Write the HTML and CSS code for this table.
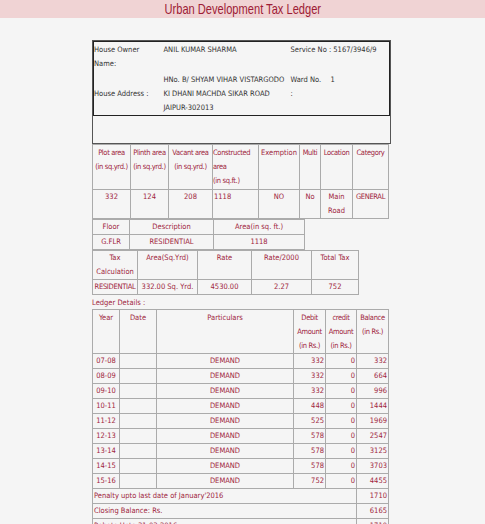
FILE: index.html
```html
<!DOCTYPE html>
<html>
<head>
<meta charset="utf-8">
<link rel="stylesheet" href="styles.css">
</head>
<body>
<div class="topbar"><h1 class="title"><span class="title-text">Urban Development Tax Ledger</span></h1></div>
<div class="wrap">
  <div class="owner">
    <table class="owner-tbl">
      <colgroup><col style="width:70px"><col style="width:127px"><col style="width:40px"><col></colgroup>
      <tr class="r1">
        <td>House Owner<br>Name:</td>
        <td>ANIL KUMAR SHARMA</td>
        <td colspan="2" class="nowrap">Service No : 5167/3946/9</td>
      </tr>
      <tr class="r2">
        <td class="mid">House Address :</td>
        <td>HNo. B/ SHYAM VIHAR VISTARGODO KI DHANI MACHDA SIKAR ROAD JAIPUR-302013</td>
        <td>Ward No.<br>:</td>
        <td>1</td>
      </tr>
    </table>
    <div class="owner-blank"></div>
  </div>

  <table class="grid plot">
    <colgroup><col style="width:38px"><col style="width:38px"><col style="width:44px"><col style="width:46px"><col style="width:41px"><col style="width:21px"><col style="width:32px"><col style="width:36px"></colgroup>
    <tr class="head3">
      <td class="nw">Plot area<br>(in sq.yrd.)</td>
      <td class="nw">Plinth area<br>(in sq.yrd.)</td>
      <td class="nw">Vacant area<br>(in sq.yrd.)</td>
      <td class="l nw">Constructed<br>area<br>(in sq.ft.)</td>
      <td>Exemption</td>
      <td class="nw">Multi</td>
      <td class="nw">Location</td>
      <td class="nw">Category</td>
    </tr>
    <tr>
      <td>332</td>
      <td>124</td>
      <td>208</td>
      <td class="l">1118</td>
      <td>NO</td>
      <td>No</td>
      <td>Main<br>Road</td>
      <td class="nw">GENERAL</td>
    </tr>
  </table>

  <table class="grid floor">
    <colgroup><col style="width:37px"><col style="width:84px"><col style="width:91px"></colgroup>
    <tr><td>Floor</td><td>Description</td><td>Area(in sq. ft.)</td></tr>
    <tr><td>G.FLR</td><td>RESIDENTIAL</td><td>1118</td></tr>
  </table>

  <table class="grid tax">
    <colgroup><col style="width:45px"><col style="width:60px"><col style="width:54px"><col style="width:60px"><col style="width:47px"></colgroup>
    <tr><td>Tax<br>Calculation</td><td>Area(Sq.Yrd)</td><td>Rate</td><td>Rate/2000</td><td>Total Tax</td></tr>
    <tr><td class="tight">RESIDENTIAL</td><td>332.00 Sq. Yrd.</td><td>4530.00</td><td>2.27</td><td>752</td></tr>
  </table>

  <div class="ledger-label">Ledger Details :</div>

  <table class="grid ledger">
    <colgroup><col style="width:27px"><col style="width:37px"><col style="width:137px"><col style="width:32px"><col style="width:31px"><col style="width:32px"></colgroup>
    <tr class="lhead">
      <td>Year</td><td>Date</td><td>Particulars</td>
      <td class="nw">Debit<br>Amount<br>(in Rs.)</td><td class="nw">credit<br>Amount<br>(in Rs.)</td><td class="nw">Balance<br>(in Rs.)</td>
    </tr>
    <tr><td>07-08</td><td></td><td>DEMAND</td><td class="r">332</td><td class="r">0</td><td class="r">332</td></tr>
    <tr><td>08-09</td><td></td><td>DEMAND</td><td class="r">332</td><td class="r">0</td><td class="r">664</td></tr>
    <tr><td>09-10</td><td></td><td>DEMAND</td><td class="r">332</td><td class="r">0</td><td class="r">996</td></tr>
    <tr><td>10-11</td><td></td><td>DEMAND</td><td class="r">448</td><td class="r">0</td><td class="r">1444</td></tr>
    <tr><td>11-12</td><td></td><td>DEMAND</td><td class="r">525</td><td class="r">0</td><td class="r">1969</td></tr>
    <tr><td>12-13</td><td></td><td>DEMAND</td><td class="r">578</td><td class="r">0</td><td class="r">2547</td></tr>
    <tr><td>13-14</td><td></td><td>DEMAND</td><td class="r">578</td><td class="r">0</td><td class="r">3125</td></tr>
    <tr><td>14-15</td><td></td><td>DEMAND</td><td class="r">578</td><td class="r">0</td><td class="r">3703</td></tr>
    <tr><td>15-16</td><td></td><td>DEMAND</td><td class="r">752</td><td class="r">0</td><td class="r">4455</td></tr>
    <tr><td colspan="5" class="l">Penalty upto last date of January'2016</td><td class="r">1710</td></tr>
    <tr><td colspan="5" class="l">Closing Balance: Rs.</td><td class="r">6165</td></tr>
    <tr><td colspan="5" class="l">Rebate Upto 31-03-2016</td><td class="r">1710</td></tr>
  </table>
</div>
</body>
</html>
```

FILE: styles.css
```css
html, body {
  margin: 0;
  padding: 0;
  background: #f5f5f5;
}
body {
  font-family: "DejaVu Sans Condensed", "DejaVu Sans", sans-serif;
  font-size: 7.5px;
  color: #a0253d;
}
.topbar {
  height: 18px;
  background: #f0d3d4;
  text-align: center;
  overflow: hidden;
}
.title {
  margin: 0;
  font-family: "Liberation Sans", Arial, sans-serif;
  font-weight: normal;
  font-size: 15px;
  line-height: 18px;
  color: #9e1c36;
}
.title-text {
  display: inline-block;
  transform: scaleX(0.74);
  transform-origin: center;
}
.wrap {
  margin: 22px 0 0 92px;
  width: 299px;
}
.owner {
  border: 1px solid #555;
  width: 297px;
}
.owner-tbl {
  width: 100%;
  border-collapse: collapse;
  table-layout: fixed;
  border: 1px solid #222;
  color: #333;
}
.owner-tbl td {
  padding: 0 1px 0 0;
  line-height: 14px;
  vertical-align: top;
}
.owner-tbl .r1 td { height: 30px; padding-top: 1px; }
.owner-tbl .r2 td { height: 41px; }
.owner-tbl td.mid { vertical-align: middle; }
.nowrap { white-space: nowrap; }
.owner-blank {
  height: 27px;
}
.grid {
  border-collapse: collapse;
  table-layout: fixed;
}
.grid td {
  border: 1px solid #ababab;
  padding: 0 1px;
  line-height: 14px;
  text-align: center;
  vertical-align: top;
  overflow: hidden;
}
.grid td.nw {
  white-space: nowrap;
  padding: 0;
  letter-spacing: -0.35px;
}
.grid td.l { text-align: left; }
.grid td.r { text-align: right; }
.plot { width: 297px; }
.plot .head3 td { padding-top: 1px; height: 43px; }
.plot td { height: 28px; }
.floor { width: 213px; }
.floor td { height: 14px; }
.tax { width: 267px; }
.tax td { height: 14px; }
.tax td.tight { padding: 0; letter-spacing: -0.3px; }
.ledger-label {
  height: 14px;
  line-height: 16px;
}
.ledger { width: 297px; }
.ledger td { height: 14px; }
.ledger .lhead td { height: 42px; padding-top: 1px; }
.ledger .lhead td.nw { padding-top: 1px; }
```
